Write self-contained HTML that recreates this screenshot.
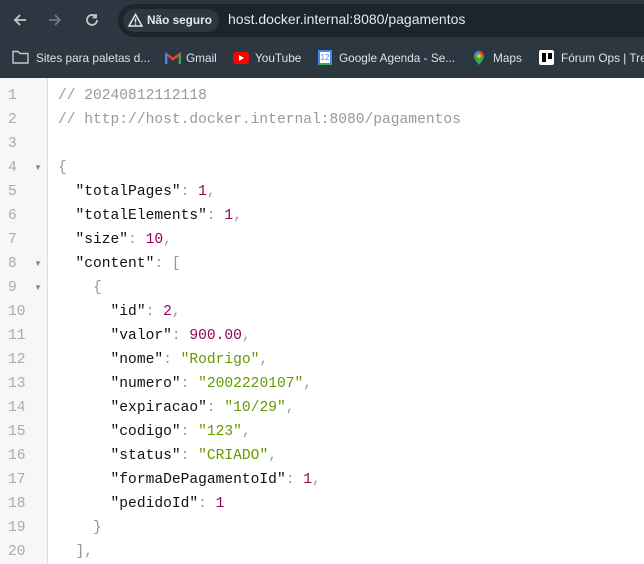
<!DOCTYPE html>
<html><head><meta charset="utf-8"><style>
*{margin:0;padding:0;box-sizing:border-box}
body{width:644px;height:564px;overflow:hidden;background:#fff;font-family:"Liberation Sans",sans-serif;position:relative}
.top{position:absolute;left:0;top:0;width:644px;height:78px;background:#2d3741}
.omni{position:absolute;left:118px;top:4px;width:560px;height:33px;border-radius:17px;background:#1c242c}
.chip{position:absolute;left:123px;top:9px;width:96px;height:23px;border-radius:12px;background:#2d3741;color:#e6e8ea;font-size:11.8px;font-weight:bold;line-height:23px;padding-left:24px}
.url{position:absolute;left:228px;top:11px;color:#e6e8ea;font-size:14px}
.bm{position:absolute;top:51px;color:#dfe2e5;font-size:11.8px;white-space:nowrap}
.gut{position:absolute;left:0;top:78px;width:48px;height:486px;background:#f7f7f7;border-right:1px solid #ddd}
.code{position:absolute;top:84px;font-family:"Liberation Mono",monospace;font-size:14.6px;line-height:24px;white-space:pre}
.ln{left:8px;color:#aaa}
.src{left:58px;color:#111}
.c{color:#999}.p{color:#999}.n{color:#905}.s{color:#690}.b{color:#998}
.ar{position:absolute;left:34px;color:#888;font-size:8px}
</style></head><body>
<div class="top"></div>
<svg style="position:absolute;left:11px;top:11px" width="18" height="18" viewBox="0 0 18 18"><path d="M15 9H4M9 4L4 9l5 5" stroke="#c4c8cc" stroke-width="1.8" fill="none"/></svg>
<svg style="position:absolute;left:46px;top:11px" width="18" height="18" viewBox="0 0 18 18"><path d="M3 9h11M9 4l5 5-5 5" stroke="#6f7780" stroke-width="1.8" fill="none"/></svg>
<svg style="position:absolute;left:83px;top:11px" width="18" height="18" viewBox="0 0 18 18"><path d="M14 9a5 5 0 1 1-1.5-3.6M13 3v3.5H9.5" stroke="#c4c8cc" stroke-width="1.8" fill="none"/></svg>
<div class="omni"></div>
<div class="chip">Não seguro</div>
<svg style="position:absolute;left:128px;top:13px" width="15" height="14" viewBox="0 0 15 14"><path d="M7.5 1.5L14 13H1z" stroke="#e6e8ea" stroke-width="1.5" fill="none"/><path d="M7.5 5.5v4M7.5 10.5v1.2" stroke="#e6e8ea" stroke-width="1.4"/></svg>
<div class="url">host.docker.internal:8080/pagamentos</div>
<svg style="position:absolute;left:12px;top:50px" width="17" height="14" viewBox="0 0 17 14"><path d="M1 1.5h5l2 2h8v9.5H1z" stroke="#c4c8cc" stroke-width="1.4" fill="none"/></svg>
<div class="bm" style="left:36px">Sites para paletas d...</div>
<svg style="position:absolute;left:165px;top:52px" width="16" height="12" viewBox="0 0 16 12"><path d="M1 12V2l7 5 7-5v10" stroke="#ea4335" stroke-width="2.4" fill="none"/><path d="M1 12V2" stroke="#4285f4" stroke-width="2.4"/><path d="M15 12V2" stroke="#34a853" stroke-width="2.4"/></svg>
<div class="bm" style="left:186px">Gmail</div>
<div style="position:absolute;left:233px;top:52px;width:16px;height:12px;background:#f00;border-radius:3px"></div>
<div style="position:absolute;left:239px;top:55px;border-left:5px solid #fff;border-top:3px solid transparent;border-bottom:3px solid transparent"></div>
<div class="bm" style="left:255px">YouTube</div>
<div style="position:absolute;left:318px;top:50px;width:14px;height:15px;background:#fff;border:2px solid #4285f4;border-bottom-color:#34a853;font-size:8px;color:#4285f4;text-align:center;line-height:11px">12</div>
<div class="bm" style="left:339px">Google Agenda - Se...</div>
<svg style="position:absolute;left:473px;top:50px" width="12" height="16" viewBox="0 0 12 16"><path d="M6 15C2 10 1 8 1 6a5 5 0 0 1 10 0c0 2-1 4-5 9z" fill="#34a853"/><path d="M1 6a5 5 0 0 1 5-5l0 5z" fill="#4285f4"/><path d="M6 1a5 5 0 0 1 5 5H6z" fill="#ea4335"/><circle cx="6" cy="6" r="2" fill="#fbbc04"/></svg>
<div class="bm" style="left:493px">Maps</div>
<div style="position:absolute;left:539px;top:50px;width:15px;height:15px;background:#fff;border-radius:2px"></div>
<div style="position:absolute;left:542px;top:53px;width:4px;height:9px;background:#000"></div>
<div style="position:absolute;left:548px;top:53px;width:4px;height:6px;background:#000"></div>
<div class="bm" style="left:561px">Fórum Ops | Tre</div>
<div class="gut"></div>
<div class="code ln">1
2
3
4
5
6
7
8
9
10
11
12
13
14
15
16
17
18
19
20</div>
<div class="ar" style="top:163px">▼</div>
<div class="ar" style="top:259px">▼</div>
<div class="ar" style="top:283px">▼</div>
<div class="code src"><span class="c">// 20240812112118</span>
<span class="c">// http://host.docker.internal:8080/pagamentos</span>

<span class="b">{</span>
  "totalPages"<span class="p">:</span> <span class="n">1</span><span class="p">,</span>
  "totalElements"<span class="p">:</span> <span class="n">1</span><span class="p">,</span>
  "size"<span class="p">:</span> <span class="n">10</span><span class="p">,</span>
  "content"<span class="p">:</span> <span class="b">[</span>
    <span class="b">{</span>
      "id"<span class="p">:</span> <span class="n">2</span><span class="p">,</span>
      "valor"<span class="p">:</span> <span class="n">900.00</span><span class="p">,</span>
      "nome"<span class="p">:</span> <span class="s">"Rodrigo"</span><span class="p">,</span>
      "numero"<span class="p">:</span> <span class="s">"2002220107"</span><span class="p">,</span>
      "expiracao"<span class="p">:</span> <span class="s">"10/29"</span><span class="p">,</span>
      "codigo"<span class="p">:</span> <span class="s">"123"</span><span class="p">,</span>
      "status"<span class="p">:</span> <span class="s">"CRIADO"</span><span class="p">,</span>
      "formaDePagamentoId"<span class="p">:</span> <span class="n">1</span><span class="p">,</span>
      "pedidoId"<span class="p">:</span> <span class="n">1</span>
    <span class="b">}</span>
  <span class="b">]</span><span class="p">,</span></div>
</body></html>
